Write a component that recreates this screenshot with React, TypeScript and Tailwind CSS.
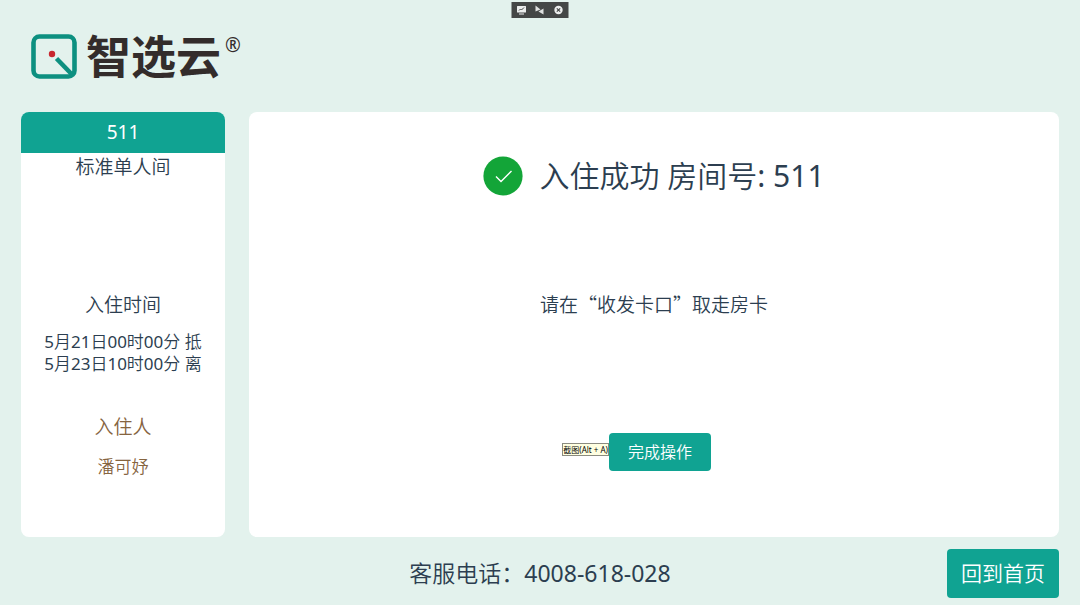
import React from 'react';

const Logo: React.FC = () => (
  <div className="flex items-center gap-2">
    <svg className="size-12" viewBox="0 0 48 48" fill="none">
      <rect x="3.5" y="4.5" width="41" height="40" rx="6" stroke="#0d9080" strokeWidth="4.6" />
      <circle cx="22" cy="22" r="3.2" fill="#c8282f" />
      <path d="M26.5 26.5 L41.5 42" stroke="#0d9080" strokeWidth="4.6" />
    </svg>
    <h1 className="flex items-start pb-0.5 font-['Noto_Sans_CJK_SC',sans-serif] text-[45px] leading-12 font-bold text-[#332c2b]">
      智选云
      <sup className="top-0 pl-1 font-['Noto_Sans',sans-serif] text-[19px] leading-7 font-normal">®</sup>
    </h1>
  </div>
);

const CaptureBar: React.FC = () => (
  <div className="absolute top-[2px] left-1/2 flex h-4 w-[57px] -translate-x-1/2 items-center justify-around bg-[#444746] px-px">
    <button type="button" aria-label="批注" className="size-3">
      <svg viewBox="0 0 12 12">
        <rect x="1.5" y="2" width="9" height="6.5" rx="0.5" fill="#eceeed" />
        <path d="M3.5 10 H8.5" stroke="#eceeed" strokeWidth="1.2" />
        <path d="M3.5 6.5 L5 5 L6 6 L8.5 3.5" fill="none" stroke="#444746" />
      </svg>
    </button>
    <button type="button" aria-label="缩小" className="size-3">
      <svg viewBox="0 0 12 12" fill="#dfe1e0">
        <path d="M2 1.5 L7 5.5 L2 7.5 Z" />
        <path d="M10 4.5 V10.5 L5 7.5 Z" />
      </svg>
    </button>
    <button type="button" aria-label="关闭" className="size-3">
      <svg viewBox="0 0 12 12">
        <circle cx="6" cy="6" r="4.2" fill="#eceeed" />
        <path d="M4.3 4.3 L7.7 7.7 M7.7 4.3 L4.3 7.7" stroke="#444746" strokeWidth="1.2" />
      </svg>
    </button>
  </div>
);

const BookingCard: React.FC = () => (
  <aside className="w-51 shrink-0 overflow-hidden rounded-lg bg-white text-center">
    <h2 className="bg-[#10a392] text-[19px] leading-[41px] text-white">511</h2>
    <p className="text-[19px] leading-7">标准单人间</p>

    <h3 className="mt-[110px] text-[19px] leading-7">入住时间</h3>
    <p className="mt-3 text-[17px] leading-[22px]">
      5月21日00时00分 抵
      <br />
      5月23日10时00分 离
    </p>

    <div className="mt-[38px] text-[#86643f]">
      <h3 className="text-[19px] leading-7">入住人</h3>
      <p className="mt-3 text-[17px] leading-7">潘可妤</p>
    </div>
  </aside>
);

const CheckInResult: React.FC = () => (
  <main className="flex flex-1 flex-col items-center rounded-lg bg-white pt-10">
    <div className="flex items-center gap-4">
      <svg className="size-10" viewBox="0 0 40 40" fill="none">
        <circle cx="20" cy="20" r="19.6" fill="#13a538" />
        <path d="M13 20.5 L18 25.5 L28.5 15" stroke="#fff" strokeWidth="1.4" />
      </svg>
      <h2 className="text-[30px] leading-12">入住成功 房间号: 511</h2>
    </div>

    <p className="mt-[90px] font-['Noto_Sans_CJK_SC',sans-serif] text-[19px] leading-7 font-[350]">
      请在“收发卡口”取走房卡
    </p>

    <div className="mt-[115px] pl-3">
      <div className="relative">
        <button type="button" className="h-[38px] rounded bg-[#10a392] px-[19px] text-base text-white">
          完成操作
        </button>
        <span
          role="tooltip"
          className="absolute top-[10px] right-full border border-[#8b8b80] bg-[#ffffe1] text-[8px] leading-[11px] whitespace-nowrap text-black"
        >
          截图(Alt + A)
        </span>
      </div>
    </div>
  </main>
);

export default function App() {
  return (
    <div className="relative flex min-h-screen flex-col bg-[#e3f2ed] px-[21px] font-['Noto_Sans','Noto_Sans_CJK_SC_DemiLight','Noto_Sans_CJK_SC',sans-serif] text-[#2c3e50]">
      <CaptureBar />

      <header className="flex h-28 items-center pl-[9px]">
        <Logo />
      </header>

      <div className="flex flex-1 gap-6">
        <BookingCard />
        <CheckInResult />
      </div>

      <footer className="grid h-17 grid-cols-[1fr_auto_1fr] items-center pt-1">
        <p className="col-start-2 text-[23px]">客服电话：4008-618-028</p>
        <button
          type="button"
          className="h-[49px] justify-self-end rounded bg-[#10a392] px-[14px] pt-0.5 text-[21px] text-white"
        >
          回到首页
        </button>
      </footer>
    </div>
  );
}
